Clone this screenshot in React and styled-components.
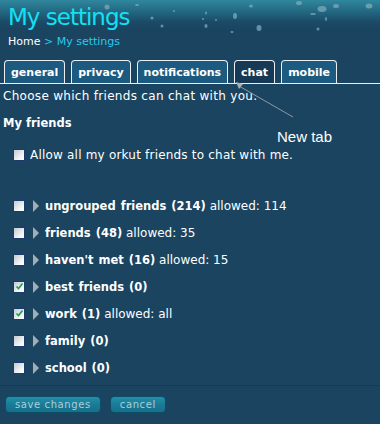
import React from 'react';
import styled, { createGlobalStyle } from 'styled-components';

const Global = createGlobalStyle`
  html, body { margin: 0; padding: 0; background: #1a4460; }
  body { font-family: "DejaVu Sans", Verdana, sans-serif; font-size: 12px; color: #ffffff; }
`;

const Page = styled.div`
  width: 380px;
  height: 424px;
  background: #1a4460;
  position: relative;
  overflow: hidden;
`;

const Header = styled.div`
  height: 54px;
  padding: 3px 0 0 8px;
  box-sizing: border-box;
  background: linear-gradient(to bottom, #2f879e 0px, #22677f 12px, #1b4a67 22px, #1a4460 30px);
  position: relative;
`;

const Bubbles = styled.svg`
  position: absolute;
  left: 0;
  top: 0;
`;

const Title = styled.h1`
  position: relative;
  margin: 0;
  font-size: 23px;
  font-weight: normal;
  letter-spacing: -1px;
  color: #14e0f5;
  line-height: 28px;
`;

const Crumbs = styled.div`
  position: relative;
  margin-top: 4px;
  color: #2ec9e8;
  font-size: 11px;
  line-height: 13px;
  span { color: #ffffff; }
`;

const TabBar = styled.div`
  display: flex;
  gap: 6px;
  padding: 6px 0 0 4px;
  border-bottom: 1px solid #e8eef2;
`;

const Tab = styled.div`
  height: 23px;
  box-sizing: border-box;
  padding: 0 6px;
  display: flex;
  align-items: center;
  font-weight: bold;
  font-size: 11px;
  color: #ffffff;
  background: ${p => (p.$active ? '#163a55' : '#1d5a80')};
  border: 1px solid #e8eef2;
  border-bottom: none;
  border-radius: 4px 4px 0 0;
`;

const Intro = styled.p`
  margin: 5px 0 0 3px;
  line-height: 14px;
  letter-spacing: 0.3px;
`;

const Section = styled.h3`
  margin: 13px 0 0 3px;
  line-height: 14px;
  font-size: 11.5px;
  font-weight: bold;
`;

const Row = styled.div`
  display: flex;
  align-items: center;
  padding-left: 13px;
  height: 27px;
`;

const AllowRow = styled(Row)`
  margin-top: 11px;
  letter-spacing: 0.2px;
`;

const Box = styled.span`
  width: 12px;
  height: 12px;
  box-sizing: border-box;
  border: 1px solid #1c3a6a;
  background: linear-gradient(135deg, #c4cad0, #f4f6f8 70%, #ffffff);
  display: inline-flex;
  align-items: center;
  justify-content: center;
  margin-right: ${p => (p.$tight ? '5px' : '8px')};
  flex: none;
`;

const Arrow = styled.span`
  width: 0;
  height: 0;
  border-top: 6px solid transparent;
  border-bottom: 6px solid transparent;
  border-left: 6px solid #a3adb4;
  margin-right: 6px;
`;

const Name = styled.b`
  font-weight: bold;
  font-size: 11.5px;
  word-spacing: 1px;
`;

const List = styled.div`
  margin-top: 24px;
`;

const Divider = styled.div`
  margin-top: 4px;
  border-top: 1px solid #163a55;
`;

const Buttons = styled.div`
  display: flex;
  gap: 9px;
  padding: 10px 0 0 5px;
`;

const Button = styled.button`
  height: 17px;
  padding: 0 9px;
  font-family: "DejaVu Sans", Verdana, sans-serif;
  font-size: 10px;
  color: #aacfda;
  background: linear-gradient(to bottom, #2190ab, #1a7b97 50%, #16708b);
  border: 1px solid #0f4d65;
  border-radius: 4px;
  letter-spacing: 0.6px;
  line-height: 15px;
`;

const Note = styled.div`
  position: absolute;
  left: 277px;
  top: 128px;
  font-family: "Liberation Sans", Arial, sans-serif;
  font-size: 15px;
  color: #ffffff;
`;

const Pointer = styled.svg`
  position: absolute;
  left: 0;
  top: 0;
  pointer-events: none;
`;

const Check = () => (
  <svg width="9" height="9" viewBox="0 0 9 9">
    <path d="M1.5 4.5 L3.5 6.5 L7.5 1.5" fill="none" stroke="#1aa04a" strokeWidth="1.6" />
  </svg>
);

const groups = [
  { name: 'ungrouped friends (214)', allowed: 'allowed: 114' },
  { name: 'friends (48)', allowed: 'allowed: 35' },
  { name: "haven't met (16)", allowed: 'allowed: 15' },
  { name: 'best friends (0)', checked: true },
  { name: 'work (1)', allowed: 'allowed: all', checked: true },
  { name: 'family (0)' },
  { name: 'school (0)' },
];

const tabs = ['general', 'privacy', 'notifications', 'chat', 'mobile'];

const bubbles = [
  [107, 7, 2.5, 2.5], [137, 5, 2, 1], [152, 18, 1.5, 1.5], [162, 26, 1.5, 1.5], [174, 11, 1, 1],
  [206, 13, 1, 1.5], [203, 19, 1, 1], [206, 26, 1.5, 2], [216, 20, 1, 1], [235, 16, 2, 3],
  [232, 32, 1.5, 1], [251, 6, 2, 1.5], [259, 28, 2.5, 3], [299, 3, 3, 2], [313, 14, 3, 1],
  [322, 9, 4.5, 3], [326, 19, 1, 2], [318, 29, 1.5, 1.5], [336, 6, 3, 2], [369, 6, 3.5, 2.5],
];

export default function App() {
  return (
    <Page>
      <Global />
      <Header>
        <Bubbles width="380" height="54">
          {bubbles.map(([cx, cy, rx, ry], i) => (
            <ellipse key={i} cx={cx} cy={cy} rx={rx} ry={ry} fill="#7fa9bb" opacity="0.75" />
          ))}
        </Bubbles>
        <Title>My settings</Title>
        <Crumbs><span>Home</span> &gt; My settings</Crumbs>
      </Header>
      <TabBar>
        {tabs.map(t => (
          <Tab key={t} $active={t === 'chat'}>{t}</Tab>
        ))}
      </TabBar>
      <Intro>Choose which friends can chat with you.</Intro>
      <Section>My friends</Section>
      <AllowRow>
        <Box $tight />
        <span>Allow all my orkut friends to chat with me.</span>
      </AllowRow>
      <List>
        {groups.map(g => (
          <Row key={g.name}>
            <Box>{g.checked && <Check />}</Box>
            <Arrow />
            <span>
              <Name>{g.name}</Name>{g.allowed && ' ' + g.allowed}
            </span>
          </Row>
        ))}
      </List>
      <Divider />
      <Buttons>
        <Button>save changes</Button>
        <Button>cancel</Button>
      </Buttons>
      <Pointer width="380" height="424">
        <line x1="239" y1="86" x2="293" y2="117" stroke="#8e9aa2" strokeWidth="1" />
        <path d="M236 82 L243 84 L239 89 Z" fill="#a8b0b5" />
      </Pointer>
      <Note>New tab</Note>
    </Page>
  );
}
